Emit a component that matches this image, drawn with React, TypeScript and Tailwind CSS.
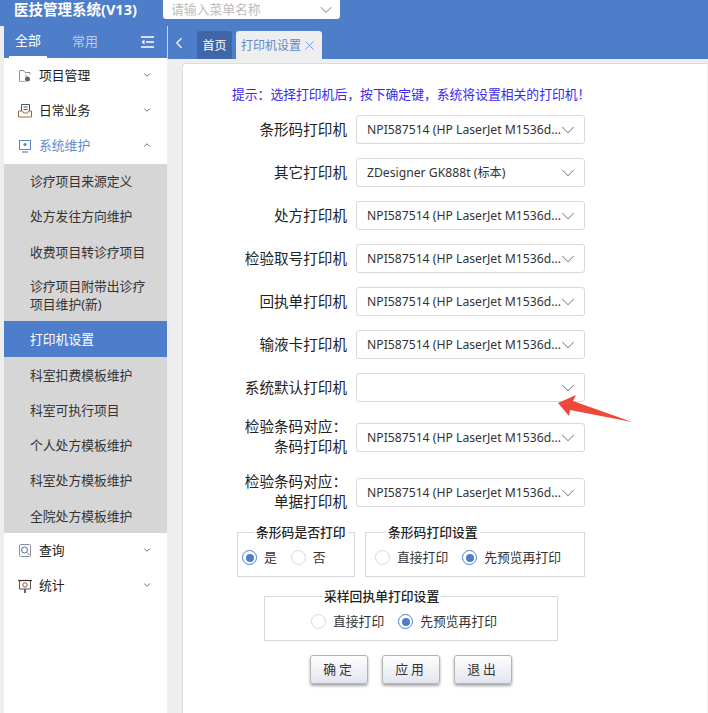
import { ChevronDown, ChevronUp, ChevronLeft, X } from 'lucide-react';

const FONT = "font-['Noto_Sans','Noto_Sans_CJK_SC',sans-serif]";

const NPI = 'NPI587514 (HP LaserJet M1536d...';

function MenuIcon({ name }: { name: string }) {
  if (name === 'project') {
    return (
      <svg width="16" height="16" viewBox="0 0 16 16" fill="none">
        <path d="M2.5 13.5v-11h4l1.5 2h5v2" stroke="#8a8f99" strokeWidth="1" />
        <path d="M2.5 13.5h6" stroke="#c9a27a" strokeWidth="1" />
        <circle cx="10.5" cy="11" r="2.5" fill="#5a6473" />
        <path d="M9 6.5v2" stroke="#c0853f" strokeWidth="1" />
      </svg>
    );
  }
  if (name === 'daily') {
    return (
      <svg width="16" height="16" viewBox="0 0 16 16" fill="none">
        <path d="M4.5 8V1.5h8V8" stroke="#4a5568" strokeWidth="1" />
        <path d="M6.5 4h4M6.5 6.5h4" stroke="#4a5568" strokeWidth="1" />
        <path d="M1.5 8h4l1 2h4l1-2h3v6h-13z" stroke="#a06a3a" strokeWidth="1" />
      </svg>
    );
  }
  if (name === 'system') {
    return (
      <svg width="16" height="16" viewBox="0 0 16 16" fill="none">
        <rect x="2.5" y="2.5" width="11" height="9" stroke="#5b86cc" strokeWidth="1" />
        <circle cx="8" cy="6.5" r="1.6" fill="#5b86cc" />
        <path d="M5 14h6" stroke="#5b86cc" strokeWidth="1.2" />
      </svg>
    );
  }
  if (name === 'query') {
    return (
      <svg width="16" height="16" viewBox="0 0 16 16" fill="none">
        <rect x="2.5" y="1.5" width="11" height="12" rx="1" stroke="#8a8f99" strokeWidth="1" />
        <circle cx="7.5" cy="7" r="3" stroke="#3f6fb5" strokeWidth="1" />
        <path d="M10 9.5l2.5 2.5" stroke="#a06a3a" strokeWidth="1" />
      </svg>
    );
  }
  return (
    <svg width="16" height="16" viewBox="0 0 16 16" fill="none">
      <path d="M1 2.5h14" stroke="#333" strokeWidth="1.2" />
      <path d="M2.5 2.5v8.5h11V2.5" stroke="#555" strokeWidth="1" />
      <circle cx="8" cy="7" r="2.2" stroke="#a0523a" strokeWidth="1" />
      <path d="M7 11h2v4H7z" fill="#5a6473" />
    </svg>
  );
}

function TopItem({ icon, label, open, active }: { icon: string; label: string; open?: boolean; active?: boolean }) {
  return (
    <div className="flex h-[35.2px] items-center pl-[13px] pr-[15px]">
      <MenuIcon name={icon} />
      <span className={`ml-[6px] flex-1 text-[12.8px] ${active ? 'text-[#5f8acb]' : 'text-[#222]'}`}>{label}</span>
      {open ? (
        <ChevronUp className="mb-[2px] h-[10px] w-[10px] text-[#555]" strokeWidth={2} />
      ) : (
        <ChevronDown className="mb-[2px] h-[10px] w-[10px] text-[#555]" strokeWidth={2} />
      )}
    </div>
  );
}

function SubItem({ label, active }: { label: string; active?: boolean }) {
  return (
    <div
      className={`flex min-h-[35.2px] items-center py-[8px] pl-[26px] pr-[14px] text-[12.8px] leading-[18px] ${
        active ? 'min-h-[36.2px] bg-[#4e7dcb] text-white' : 'text-[#333]'
      }`}
    >
      {label}
    </div>
  );
}

function Sidebar() {
  return (
    <aside className="ml-[4px] w-[163px] shrink-0 bg-white">
      <div className="flex h-[32px] items-center bg-[#4e7dc9] text-[13px]">
        <div className="ml-[5px] flex h-full w-[38px] items-center justify-center border-b-2 border-white text-white">全部</div>
        <div className="ml-[25px] text-[#b9cdea]">常用</div>
        <svg className="ml-[43px]" width="13" height="12" viewBox="0 0 13 12" fill="none">
          <path d="M0 1h13M5 6h8M0 11h13" stroke="#fff" strokeWidth="1.6" />
          <path d="M3.5 3.5L0.5 6l3 2.5z" fill="#fff" />
        </svg>
      </div>
      <TopItem icon="project" label="项目管理" />
      <TopItem icon="daily" label="日常业务" />
      <TopItem icon="system" label="系统维护" open active />
      <div className="bg-[#d6d6d6]">
        <SubItem label="诊疗项目来源定义" />
        <SubItem label="处方发往方向维护" />
        <SubItem label="收费项目转诊疗项目" />
        <SubItem label="诊疗项目附带出诊疗项目维护(新)" />
        <SubItem label="打印机设置" active />
        <SubItem label="科室扣费模板维护" />
        <SubItem label="科室可执行项目" />
        <SubItem label="个人处方模板维护" />
        <SubItem label="科室处方模板维护" />
        <SubItem label="全院处方模板维护" />
      </div>
      <TopItem icon="query" label="查询" />
      <TopItem icon="stats" label="统计" />
    </aside>
  );
}

function PrinterSelect({ value }: { value?: string }) {
  return (
    <div className="flex h-[29px] w-[229px] shrink-0 items-center rounded-[3px] border border-[#d9d9d9] bg-white pl-[10px] pr-[5px]">
      <span className="min-w-0 flex-1 whitespace-nowrap pt-[1px] text-[12.2px] text-[#333]">{value}</span>
      <ChevronDown className="-ml-[8px] h-[22px] w-[22px] shrink-0 text-[#888]" strokeWidth={1.1} />
    </div>
  );
}

function Row({ label, value }: { label: string; value?: string }) {
  return (
    <div className="flex h-[43px] items-start">
      <div className="flex h-[29px] w-[173px] items-center justify-end pr-[9px] text-[14.6px] text-[#222]">{label}</div>
      <PrinterSelect value={value} />
    </div>
  );
}

function TwoLineRow({ label, value, second }: { label: string; second: string; value: string }) {
  return (
    <div className="flex h-[55px] items-center pb-[12px]">
      <div className="-mt-[3px] w-[173px] pr-[9px] text-right text-[14.6px] leading-[20px] text-[#222]">
        {label}
        <br />
        {second}
      </div>
      <PrinterSelect value={value} />
    </div>
  );
}

function Radio({ label, checked }: { label: string; checked?: boolean }) {
  return (
    <span className="inline-flex items-center text-[12.8px] text-[#333]">
      <span
        className={`flex h-[15px] w-[15px] items-center justify-center rounded-full border bg-white ${
          checked ? 'border-[#4e7dcb]' : 'border-[#d9d9d9]'
        }`}
      >
        {checked && <span className="h-[8px] w-[8px] rounded-full bg-[#4e7dcb]" />}
      </span>
      <span className="ml-[7px]">{label}</span>
    </span>
  );
}

function GroupBox({ title, className, children }: { title: string; className: string; children: React.ReactNode }) {
  return (
    <fieldset className={`h-[54px] border border-[#d9d9d9] ${className}`}>
      <legend className="px-[2px] text-[12.8px] leading-[18px] font-medium text-[#222]">{title}</legend>
      {children}
    </fieldset>
  );
}

function ActionButton({ label }: { label: string }) {
  return (
    <button className="h-[29px] w-[58px] rounded-[3px] border border-[#b4b4b4] bg-gradient-to-b from-white to-[#e2e5ef] text-[12.8px] tracking-[3px] text-[#333] shadow-[0_2px_3px_rgba(0,0,0,0.35)]">
      {label}
    </button>
  );
}

function PrinterSettings() {
  return (
    <div className="ml-[-1px] h-full w-full rounded-tl-[4px] border-t border-l border-[#dcdcdc] bg-white pt-[21px]">
      <div className="pl-[49px] text-[12.8px] leading-[18px] text-[#3a28ee]">
        提示：选择打印机后，按下确定键，系统将设置相关的打印机！
      </div>
      <div className="mt-[12px]">
        <Row label="条形码打印机" value={NPI} />
        <Row label="其它打印机" value="ZDesigner GK888t (标本)" />
        <Row label="处方打印机" value={NPI} />
        <Row label="检验取号打印机" value={NPI} />
        <Row label="回执单打印机" value={NPI} />
        <Row label="输液卡打印机" value={NPI} />
        <Row label="系统默认打印机" />
        <TwoLineRow label="检验条码对应：" second="条码打印机" value={NPI} />
        <TwoLineRow label="检验条码对应：" second="单据打印机" value={NPI} />
      </div>
      <div className="ml-[54px] mt-[-3px] flex gap-[10px]">
        <GroupBox title="条形码是否打印" className="w-[118px] [&>legend]:ml-[16px]">
          <div className="flex gap-[14px] pl-[4px] pt-[7px]">
            <Radio label="是" checked />
            <Radio label="否" />
          </div>
        </GroupBox>
        <GroupBox title="条形码打印设置" className="w-[220px] [&>legend]:ml-[20px]">
          <div className="flex gap-[14px] pl-[9px] pt-[7px]">
            <Radio label="直接打印" />
            <Radio label="先预览再打印" checked />
          </div>
        </GroupBox>
      </div>
      <div className="ml-[81px] mt-[10px]">
        <GroupBox title="采样回执单打印设置" className="w-[294px] [&>legend]:ml-[57px]">
          <div className="flex gap-[14px] pl-[46px] pt-[7px]">
            <Radio label="直接打印" />
            <Radio label="先预览再打印" checked />
          </div>
        </GroupBox>
      </div>
      <div className="ml-[127px] mt-[14px] flex gap-[14px]">
        <ActionButton label="确定" />
        <ActionButton label="应用" />
        <ActionButton label="退出" />
      </div>
    </div>
  );
}

export default function App() {
  return (
    <div className={`flex h-[713px] w-[708px] flex-col overflow-hidden bg-[#eeeeee] ${FONT}`}>
      <header className="flex h-[26px] shrink-0 items-start bg-[#4e7dc9]">
        <div className="ml-[14px] w-[149px] text-[14.5px] leading-[18px] font-bold text-white">医技管理系统(V13)</div>
        <div className="flex h-[19px] w-[177px] items-center rounded-b-[3px] bg-white pl-[8px] pr-[4px]">
          <span className="flex-1 text-[12.8px] text-[#bbb]">请输入菜单名称</span>
          <ChevronDown className="h-[20px] w-[20px] text-[#777]" strokeWidth={1.2} />
        </div>
      </header>
      <div className="flex min-h-0 flex-1">
        <Sidebar />
        <main className="flex min-w-0 flex-1 flex-col">
          <div className="flex h-[33px] shrink-0 items-end border-l border-[#c5d5ee] bg-[#4e7dc9]">
            <ChevronLeft className="mb-[7px] ml-[2px] h-[18px] w-[18px] text-white" strokeWidth={1.5} />
            <div className="ml-[9px] flex h-[28px] w-[35px] items-center justify-center rounded-t-[3px] bg-[#3f66a8] pt-[1px] text-[12px] text-white">
              首页
            </div>
            <div className="ml-[4px] flex h-[28px] w-[86px] items-center justify-center gap-[1px] rounded-t-[3px] bg-[#eeeeee] pt-[1px] text-[12px] text-[#5f8acb]">
              打印机设置
              <X className="h-[15px] w-[15px]" strokeWidth={1.3} />
            </div>
          </div>
          <div className="min-h-0 flex-1 pl-[16px] pt-[4px]">
            <PrinterSettings />
          </div>
        </main>
      </div>
      {/* red annotation arrow over the form */}
      <svg className="absolute left-[555px] top-[395px]" width="80" height="30" viewBox="0 0 80 30">
        <path d="M3 8L21 0L18 6L77 27L15 15L14 21Z" fill="#f0473c" />
      </svg>
    </div>
  );
}
